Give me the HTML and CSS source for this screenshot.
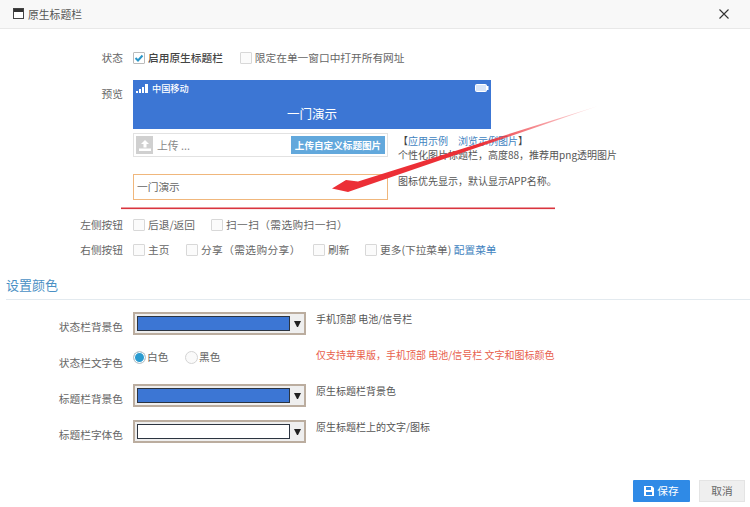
FILE: index.html
```html
<!DOCTYPE html>
<html lang="zh">
<head>
<meta charset="utf-8">
<title>原生标题栏</title>
<link rel="stylesheet" href="styles.css">
</head>
<body>
<div class="dialog">
  <header class="header">
    <div class="title">
      <svg class="title-icon" width="11" height="11" viewBox="0 0 11 11"><rect x="0.5" y="0.5" width="10" height="10" fill="#fff" stroke="#444"/><rect x="1" y="1" width="9" height="3" fill="#333"/></svg>
      <span>原生标题栏</span>
    </div>
    <svg class="close" width="10" height="10" viewBox="0 0 10 10"><path d="M0.5 0.5L9.5 9.5M9.5 0.5L0.5 9.5" stroke="#333" stroke-width="1.1" fill="none"/></svg>
  </header>

  <main class="form">
    <div class="row row-status">
      <div class="label">状态</div>
      <div class="options">
        <span class="check checked"><svg width="10" height="10" viewBox="0 0 10 10"><path d="M1.5 5L4 7.5L8.5 2.5" stroke="#2a96c8" stroke-width="2" fill="none"/></svg></span><span class="opt-text strong">启用原生标题栏</span>
        <span class="check gap-status"></span><span class="opt-text">限定在单一窗口中打开所有网址</span>
      </div>
    </div>

    <div class="row row-preview">
      <div class="label label-preview">预览</div>
      <div class="preview-col">
        <div class="phone">
          <div class="phone-status">
            <span class="carrier">
              <svg width="13" height="9" viewBox="0 0 13 9"><path d="M0 7h2v2H0zM3 5h2v4H3zM6 3h2v6H6zM9 0h3v9H9z" fill="#fff"/></svg>
              中国移动
            </span>
            <svg width="14" height="8" viewBox="0 0 14 8"><rect x="0.5" y="0.5" width="11" height="7" rx="1" fill="#d9e5f7" stroke="#fff"/><rect x="12" y="2" width="1.5" height="4" fill="#fff"/></svg>
          </div>
          <div class="phone-title">一门演示</div>
        </div>

        <div class="upload-row">
          <div class="upload">
            <span class="upload-thumb"><svg width="12" height="11" viewBox="0 0 12 11"><path d="M6 0L10 4H7.5V7.5h-3V4H2zM0 8.5h12V11H0z" fill="#fff"/></svg></span>
            <span class="upload-text">上传 ...</span>
            <span class="upload-btn">上传自定义标题图片</span>
          </div>
          <div class="upload-note">
            <div class="note-links">【<a class="link">应用示例</a><a class="link link-second">浏览示例图片</a>】</div>
            <div>个性化图片标题栏，高度88，推荐用png透明图片</div>
          </div>
        </div>

        <div class="name-row">
          <div class="name-input">一门演示</div>
          <div class="name-note">图标优先显示，默认显示APP名称。</div>
        </div>
      </div>
    </div>

    <div class="row row-left">
      <div class="label">左侧按钮</div>
      <div class="options">
        <span class="check"></span><span class="opt-text w-back">后退/返回</span>
        <span class="check"></span><span class="opt-text spaced">扫一扫（需选购扫一扫）</span>
      </div>
    </div>

    <div class="row row-right">
      <div class="label">右侧按钮</div>
      <div class="options">
        <span class="check"></span><span class="opt-text w-home">主页</span>
        <span class="check"></span><span class="opt-text w-share spaced">分享（需选购分享）</span>
        <span class="check"></span><span class="opt-text w-refresh">刷新</span>
        <span class="check"></span><span class="opt-text">更多(下拉菜单) <a class="link">配置菜单</a></span>
      </div>
    </div>

    <h2 class="section">设置颜色</h2>

    <div class="color-list">
      <div class="color-row">
        <div class="label label-color">状态栏背景色</div>
        <div class="picker"><span class="swatch"></span><span class="caret"></span></div>
        <div class="help">手机顶部 电池/信号栏</div>
      </div>
      <div class="color-row">
        <div class="label label-color">状态栏文字色</div>
        <div class="radios">
          <span class="radio on"></span><span class="radio-text">白色</span>
          <span class="radio"></span><span class="radio-text">黑色</span>
        </div>
        <div class="help help-red">仅支持苹果版，手机顶部 电池/信号栏 文字和图标颜色</div>
      </div>
      <div class="color-row">
        <div class="label label-color">标题栏背景色</div>
        <div class="picker"><span class="swatch"></span><span class="caret"></span></div>
        <div class="help">原生标题栏背景色</div>
      </div>
      <div class="color-row">
        <div class="label label-color">标题栏字体色</div>
        <div class="picker"><span class="swatch swatch-white"></span><span class="caret"></span></div>
        <div class="help">原生标题栏上的文字/图标</div>
      </div>
    </div>
  </main>

  <footer class="footer">
    <button class="btn btn-save"><svg width="10" height="10" viewBox="0 0 10 10"><path fill-rule="evenodd" d="M0 0h8l2 2v8H0zM2 1v3h5V1zM2 6v3h6V6z" fill="#fff"/></svg>保存</button>
    <button class="btn btn-cancel">取消</button>
  </footer>

  <svg class="annotation" width="750" height="507" viewBox="0 0 750 507">
    <defs>
      <linearGradient id="fade" gradientUnits="userSpaceOnUse" x1="598" y1="106" x2="480" y2="145">
        <stop offset="0" stop-color="#f04048" stop-opacity="0.1"/>
        <stop offset="1" stop-color="#ec2f36"/>
      </linearGradient>
    </defs>
    <path d="M598 106L358 181.5L346 180L332 188.5L348 192L358 188.5Z" fill="url(#fade)"/>
    <rect x="121" y="207.5" width="434" height="1.6" fill="#d9343e"/>
  </svg>
</div>
</body>
</html>
```

FILE: styles.css
```css
* { box-sizing: border-box; }
html, body { margin: 0; padding: 0; background: #fff; }
body {
  font-family: "Noto Sans CJK SC", "Liberation Sans", sans-serif;
  font-size: 10.7px;
  line-height: 14px;
  color: #666;
}
.dialog {
  position: relative;
  width: 750px;
  height: 507px;
  display: flex;
  flex-direction: column;
  overflow: hidden;
}
.header {
  height: 29px;
  flex: none;
  background: #f8f8f8;
  border-bottom: 1px solid #e8e8e8;
  display: flex;
  align-items: center;
  justify-content: space-between;
  padding: 0 21px 1px 13px;
}
.title { display: flex; align-items: center; gap: 4px; color: #555; font-size: 10.8px; }
.title-icon { display: block; }
.close { display: block; }
.form { flex: 1; }
.row { display: flex; }
.label { width: 123px; flex: none; text-align: right; margin-right: 10px; }
.options { display: flex; align-items: center; }
.row-status { margin-top: 17px; height: 24px; align-items: center; }
.row-preview { margin-top: 10px; }
.label-preview { padding-top: 7px; }
.row-left { margin-top: 13px; height: 24px; align-items: center; }
.row-right { margin-top: 1px; height: 24px; align-items: center; }

.check {
  width: 12px;
  height: 12px;
  flex: none;
  border: 1px solid #d8d8d8;
  border-radius: 1px;
  background: #fbfbfb;
  margin-right: 3px;
  display: flex;
  align-items: center;
  justify-content: center;
}
.checked { border-color: #bbb; background: #fff; }
.strong { color: #444; font-weight: 500; }
.spaced { letter-spacing: 0.4px; }
.gap-status { margin-left: 17px; }
.w-back { width: 63px; }
.w-home { width: 38px; }
.w-share { width: 112px; }
.w-refresh { width: 37px; }
.link { color: #3f83c0; }
.link-second { margin-left: 10px; }

.preview-col { width: 600px; flex: none; }
.phone { width: 358px; height: 49px; background: #3c76d4; color: #fff; }
.phone-status {
  height: 15px;
  padding: 1px 2px 0 3px;
  display: flex;
  align-items: center;
  justify-content: space-between;
}
.carrier { display: flex; align-items: center; gap: 3px; font-size: 9.2px; font-weight: 500; }
.phone-title { text-align: center; font-size: 12.5px; line-height: 16px; margin-top: 11px; }

.upload-row { display: flex; margin-top: 4px; height: 24px; }
.upload {
  width: 255px;
  height: 24px;
  flex: none;
  border: 1px solid #e2e2e2;
  padding: 2px;
  display: flex;
  align-items: center;
  background: #fff;
}
.upload-thumb {
  width: 17px;
  height: 18px;
  flex: none;
  background: #d0d0d0;
  display: flex;
  align-items: center;
  justify-content: center;
}
.upload-text { flex: 1; padding-left: 4px; color: #888; font-size: 10.8px; }
.upload-btn {
  width: 94px;
  height: 18px;
  background: #62a8dc;
  color: #fff;
  font-size: 9.6px;
  font-weight: 700;
  line-height: 18px;
  text-align: center;
}
.upload-note { margin-left: 10px; padding-top: 1px; color: #555; font-size: 10px; white-space: nowrap; }
.note-links { color: #444; }

.name-row { display: flex; margin-top: 17px; }
.name-input {
  width: 255px;
  height: 26px;
  flex: none;
  border: 1px solid #f0b77c;
  padding-left: 3px;
  line-height: 24px;
  color: #666;
}
.name-note { margin-left: 10px; color: #555; font-size: 10px; white-space: nowrap; }

.section {
  margin: 13px 0 0 6px;
  height: 25px;
  border-bottom: 1px solid #e3eaef;
  font-size: 13px;
  line-height: 19px;
  font-weight: 400;
  color: #4a90c4;
}
.color-list { margin-top: 12px; }
.color-row { display: flex; height: 36px; }
.label-color { padding-top: 8px; }
.picker {
  width: 173px;
  height: 23px;
  flex: none;
  border: 2px solid #bbad9f;
  background: #efefef;
  padding: 2px 0 2px 2px;
  display: flex;
  align-items: stretch;
}
.swatch {
  width: 153px;
  flex: none;
  background: #3c76d4;
  border: 1px solid #2c3440;
}
.swatch-white { background: #fff; }
.caret {
  flex: 1;
  align-self: center;
  height: 0;
  margin: 0 3px 0 4px;
  border-top: 6px solid #222;
  border-left: 3.5px solid transparent;
  border-right: 3.5px solid transparent;
}
.help { margin-left: 10px; color: #555; font-size: 10px; white-space: nowrap; }
.help-red { color: #e8604c; }
.radios { width: 173px; flex: none; display: flex; align-items: center; height: 14px; margin-top: 2px; }
.radio {
  width: 13px;
  height: 13px;
  flex: none;
  border: 1px solid #d4d4d4;
  border-radius: 50%;
  background: #fafafa;
}
.radio.on {
  background: #2a9bd0;
  border: 1px solid #c8c8c8;
  box-shadow: inset 0 0 0 1px #fff;
}
.radio-text { width: 39px; padding-left: 1px; }
.footer {
  flex: none;
  height: 22px;
  margin-bottom: 5px;
  display: flex;
  justify-content: flex-end;
  gap: 9px;
  padding-right: 5px;
}
.btn {
  height: 22px;
  border: 0;
  padding: 0;
  font: inherit;
  display: flex;
  align-items: center;
  justify-content: center;
  gap: 3px;
}
.btn-save { width: 57px; background: #2f8ae6; color: #fff; border-radius: 1px; }
.btn-cancel { width: 46px; background: #efefef; color: #666; border: 1px solid #e4e4e4; }
.annotation { position: absolute; left: 0; top: 0; pointer-events: none; }
```
